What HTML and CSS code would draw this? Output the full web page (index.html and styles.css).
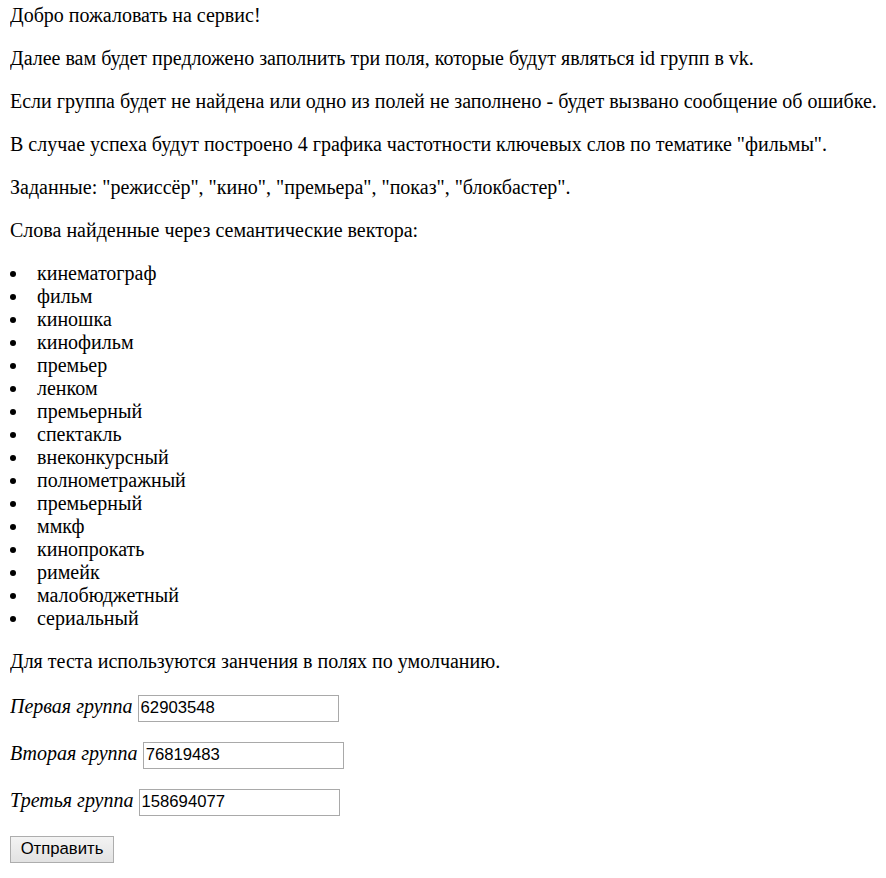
FILE: index.html
```html
<!DOCTYPE html>
<html lang="ru">
<head>
<meta charset="utf-8">
<link rel="stylesheet" href="styles.css">
</head>
<body>
<p class="first">Добро пожаловать на сервис!</p>
<p>Далее вам будет предложено заполнить три поля, которые будут являться id групп в vk.</p>
<p class="one-line">Если группа будет не найдена или одно из полей не заполнено - будет вызвано сообщение об ошибке.</p>
<p>В случае успеха будут построено 4 графика частотности ключевых слов по тематике "фильмы".</p>
<p>Заданные: "режиссёр", "кино", "премьера", "показ", "блокбастер".</p>
<p>Слова найденные через семантические вектора:</p>
<ul class="words">
<li>кинематограф</li>
<li>фильм</li>
<li>киношка</li>
<li>кинофильм</li>
<li>премьер</li>
<li>ленком</li>
<li>премьерный</li>
<li>спектакль</li>
<li>внеконкурсный</li>
<li>полнометражный</li>
<li>премьерный</li>
<li>ммкф</li>
<li>кинопрокать</li>
<li>римейк</li>
<li>малобюджетный</li>
<li>сериальный</li>
</ul>
<p>Для теста используются занчения в полях по умолчанию.</p>
<form class="form">
<p class="field"><i>Первая группа</i> <input class="inp" type="text" value="62903548"></p>
<p class="field"><i>Вторая группа</i> <input class="inp" type="text" value="76819483"></p>
<p class="field"><i>Третья группа</i> <input class="inp" type="text" value="158694077"></p>
<p class="field"><button class="btn" type="button">Отправить</button></p>
</form>
</body>
</html>
```
FILE: styles.css
```css
html, body {
  background: #fff;
}
body {
  margin: 0 10px;
  padding-top: 4px;
  font-family: "Liberation Serif", "Times New Roman", serif;
  font-size: 20px;
  line-height: 23px;
  color: #000;
}
p {
  margin: 20px 0;
}
p.first {
  margin-top: 0;
}
p.one-line {
  white-space: nowrap;
}
.words {
  list-style: none;
  margin: 20px 0;
  padding: 0;
}
.words li {
  display: flex;
  align-items: center;
}
.words li::before {
  content: "";
  width: 6px;
  height: 6px;
  border-radius: 50%;
  background: #000;
  margin: 1px 21px 0 0;
  flex: none;
}
.form {
  margin: 0;
}
.field {
  margin: 20px 0;
  line-height: 27px;
  height: 27px;
}
.inp {
  width: 201px;
  height: 27px;
  box-sizing: border-box;
  border: 1px solid #a9a9a9;
  padding: 0 2px;
  font-family: "Liberation Sans", Arial, sans-serif;
  font-size: 16.7px;
  color: #000;
  background: #fff;
  vertical-align: middle;
  margin: 0;
}
.btn {
  width: 104px;
  height: 27px;
  box-sizing: border-box;
  border: 1px solid #adadad;
  border-radius: 0;
  background: linear-gradient(#f3f3f3, #e2e2e2);
  font-family: "Liberation Sans", Arial, sans-serif;
  font-size: 16.7px;
  color: #000;
  padding: 0 8px;
  margin: 0;
  vertical-align: middle;
}
```
